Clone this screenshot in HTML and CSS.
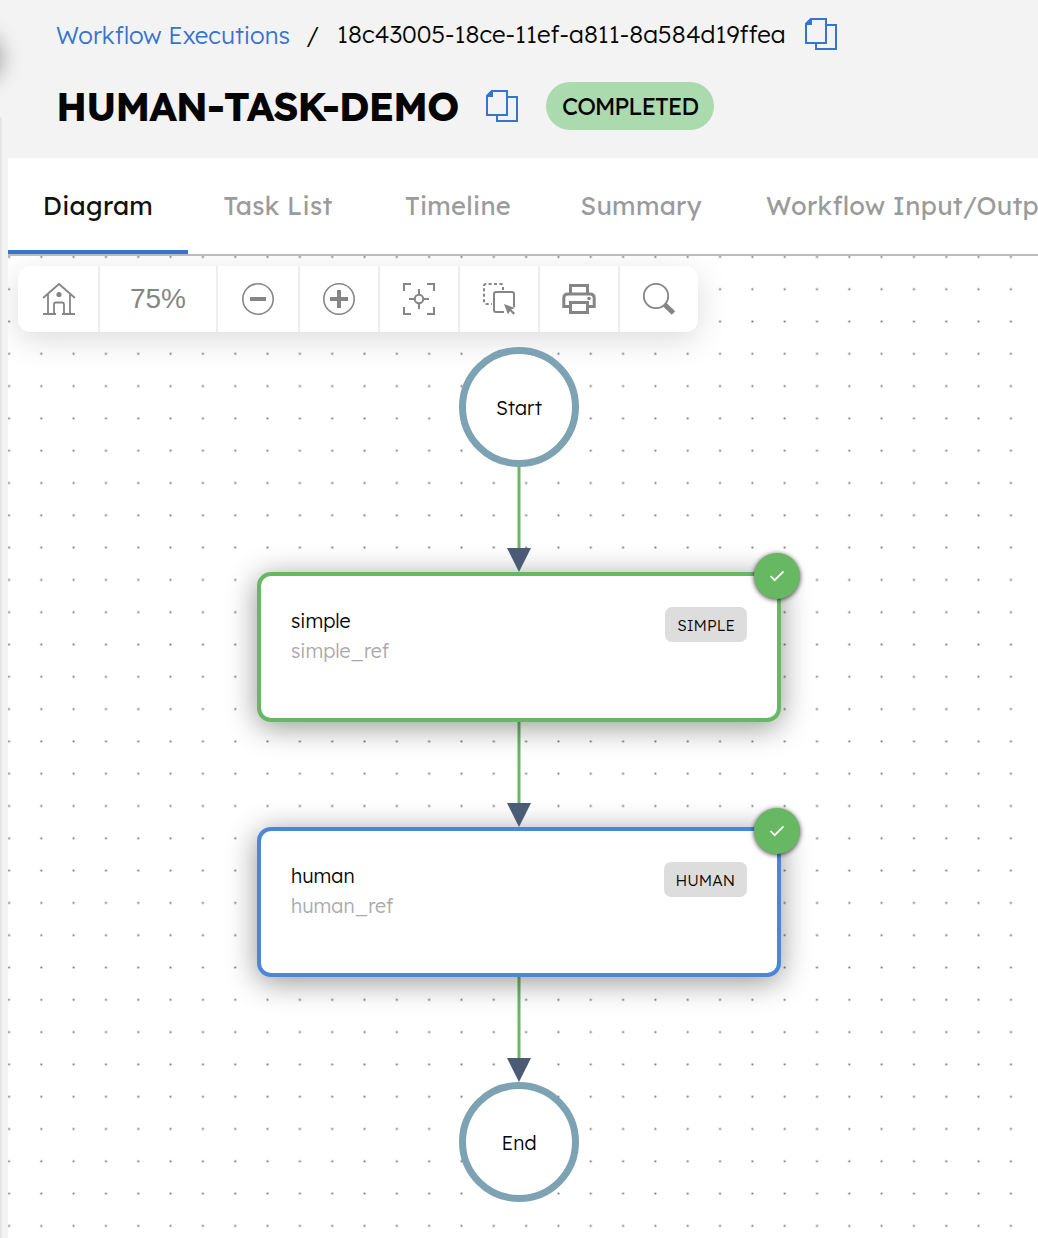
FILE: index.html
```html
<!DOCTYPE html>
<html lang="en">
<head>
<meta charset="utf-8">
<title>HUMAN-TASK-DEMO</title>
<link rel="stylesheet" href="styles.css">
</head>
<body>
<svg width="0" height="0" class="defs">
  <symbol id="copy" viewBox="0 0 32 32"><path d="M6 1H21V25H1V6ZM21 7H31V31H11V25" fill="none" stroke="currentColor" stroke-width="2"/><path d="M6 1V6H1Z" fill="currentColor" stroke="currentColor" stroke-width="2"/></symbol>
</svg>
<div class="app">
  <div class="rail"><div class="knob"></div><div class="rail-line"></div></div>
  <header class="header">
    <nav class="crumbs">
      <a class="crumb-link">Workflow Executions</a>
      <span class="slash">/</span>
      <span class="crumb-id">18c43005-18ce-11ef-a811-8a584d19ffea</span>
      <svg class="copy"><use href="#copy"/></svg>
    </nav>
    <div class="title-row">
      <h1 class="title">HUMAN-TASK-DEMO</h1>
      <svg class="copy"><use href="#copy"/></svg>
      <span class="status">COMPLETED</span>
    </div>
  </header>
  <main class="main">
    <div class="tabs">
      <div class="tab tab-active">Diagram</div>
      <div class="tab">Task List</div>
      <div class="tab">Timeline</div>
      <div class="tab tab-summary">Summary</div>
      <div class="tab tab-last">Workflow Input/Output</div>
    </div>
    <div class="canvas">
      <svg class="grid" width="1030" height="982">
        <defs><pattern id="dots" x="-15.15" y="-15.25" width="32.32" height="32.3" patternUnits="userSpaceOnUse"><rect x="15.25" y="15.25" width="1.8" height="1.8" fill="#6c6c6c"/></pattern></defs>
        <rect width="1030" height="982" fill="url(#dots)"/>
      </svg>
      <div class="toolbar">
        <div class="tool tool-home"><svg width="34" height="34" viewBox="0 0 34 34" fill="none" stroke="currentColor" stroke-width="1.8"><path d="M1 16 17 2 33 16M6 12V32M28 12V32M1 32H14M20 32H33M12 32V22.500Q12 20.500 14 20.500H20Q22 20.500 22 22.500V32"/><circle cx="17" cy="12.5" r="2.6" fill="currentColor" stroke="none"/></svg></div>
        <div class="tool tool-zoom">75%</div>
        <div class="tool tool-minus"><svg width="34" height="34" viewBox="0 0 34 34" fill="none" stroke="currentColor"><circle cx="17" cy="17" r="15.2" stroke-width="1.6"/><path d="M9 17H25" stroke-width="4"/></svg></div>
        <div class="tool"><svg width="34" height="34" viewBox="0 0 34 34" fill="none" stroke="currentColor"><circle cx="17" cy="17" r="15.2" stroke-width="1.6"/><path d="M8 17H26M17 8V26" stroke-width="4"/></svg></div>
        <div class="tool"><svg width="34" height="34" viewBox="0 0 34 34" fill="none" stroke="currentColor" stroke-width="2"><path d="M2 9V2H9M25 2H32V9M32 25V32H25M9 32H2V25"/><circle cx="17" cy="17" r="4.2"/><path d="M7 17H13M21 17H27M17 7V13M17 21V27"/></svg></div>
        <div class="tool"><svg width="34" height="34" viewBox="0 0 34 34" fill="none" stroke="currentColor" stroke-width="2"><path d="M21 8V4Q21 2 19 2H4Q2 2 2 4V20Q2 22 4 22H10" stroke-dasharray="3 2.4"/><path d="M22 30H14Q12 30 12 28V12Q12 10 14 10H30Q32 10 32 12V25"/><path d="M22 22 33 26 29.3 27.5 33 31 31.5 32.7 28 29 26 32.5Z" fill="currentColor" stroke="none"/></svg></div>
        <div class="tool"><svg width="36" height="34" viewBox="0 0 36 34" fill="none" stroke="currentColor" stroke-width="3"><path d="M9.5 11V3.5H26.500V11M9 24.500H2.800V16Q2.800 12 7 12H29Q33.200 12 33.200 16V24.500H27M9.500 20.500H26.500V30.500H9.500Z"/><circle cx="28" cy="16.500" r="1.800" fill="currentColor" stroke="none"/></svg></div>
        <div class="tool tool-search"><svg width="34" height="34" viewBox="0 0 34 34" fill="none" stroke="currentColor"><circle cx="14" cy="14" r="12.200" stroke-width="1.800"/><path d="M22.500 22.500 31.500 31" stroke-width="5"/></svg></div>
      </div>
      <svg class="edges" width="1030" height="982" fill="none">
        <path d="M511 210V294M511 466V549M511 721V804" stroke="#67b862" stroke-width="3"/>
      </svg>
      <div class="terminal start">Start</div>
      <div class="node node-simple">
        <div class="names"><span>simple</span><span class="ref">simple_ref</span></div>
        <span class="kind kind-simple">SIMPLE</span>
        <span class="badge"><svg width="16" height="12" viewBox="0 0 16 12"><path d="M1.500 6 5.700 10.200 14.500 1.300" fill="none" stroke="#fff" stroke-width="1.700"/></svg></span>
      </div>
      <div class="node node-human">
        <div class="names"><span>human</span><span class="ref">human_ref</span></div>
        <span class="kind kind-human">HUMAN</span>
        <span class="badge"><svg width="16" height="12" viewBox="0 0 16 12"><path d="M1.500 6 5.700 10.200 14.500 1.300" fill="none" stroke="#fff" stroke-width="1.700"/></svg></span>
      </div>
      <div class="terminal end">End</div>
      <svg class="edges" width="1030" height="982" fill="#4b5a75"><path d="M499 292H523L511 316ZM499 547H523L511 571ZM499 802H523L511 826Z"/></svg>
    </div>
  </main>
</div>
</body>
</html>
```
FILE: styles.css
```css
* { box-sizing: border-box; }
body { margin: 0; font-family: Lexend, Inter, sans-serif; color: #050505; }
.defs { position: absolute; }
.app { position: relative; width: 1038px; height: 1238px; overflow: hidden; background: #f3f3f3; display: flex; flex-direction: column; }
svg { display: block; flex: none; }
.rail { position: absolute; left: 0; top: 0; width: 8px; height: 100%; }
.knob { position: absolute; left: -47px; top: 35px; width: 46px; height: 46px; border-radius: 50%; box-shadow: 0 0 20px 4px rgba(0,0,0,.3); }
.rail-line { position: absolute; left: 0; top: 117px; width: 2px; bottom: 0; background: #e6e6e6; border-radius: 0 2px 0 0; }
.header { height: 158px; padding: 18px 0 0 56px; white-space: nowrap; }
.crumbs { display: flex; height: 32px; align-items: center; font-size: 24px; font-weight: 300; line-height: 32px; }
.crumb-link { width: 250px; color: #3674d0; padding-top: 2px; }
.slash { width: 31px; padding-top: 2px; }
.crumb-id { width: 468px; }
.copy { width: 32px; height: 32px; color: #3674d0; }
.title-row { display: flex; height: 48px; align-items: center; margin-top: 32px; }
.title { width: 430px; margin: 0; font-size: 40px; line-height: 48px; font-weight: 700; letter-spacing: -1.2px; }
.status { width: 168px; height: 48px; margin-left: 28px; border-radius: 24px; background: #acdaaf; display: flex; align-items: center; justify-content: center; font-size: 24px; font-weight: 400; letter-spacing: -1.2px; }
.main { margin-left: 8px; background: #fff; height: 1080px; }
.tabs { display: flex; height: 98px; border-bottom: 2px solid #bbb; white-space: nowrap; overflow: hidden; }
.tab { flex: none; height: 96px; width: 180px; display: flex; align-items: center; justify-content: center; font-size: 25.500px; color: #9b9b9b; letter-spacing: .3px; padding-bottom: 2px; }
.tab-active { color: #111; border-bottom: 4px solid #3674cf; padding: 2px 0 0; }
.tab-summary { width: 186px; }
.tab-last { justify-content: flex-start; width: 340px; padding-left: 32px; }
.canvas { position: relative; height: 982px; overflow: hidden; }
.grid, .edges { position: absolute; left: 0; top: 0; }
.toolbar { position: absolute; left: 10px; top: 10px; display: flex; width: 680px; height: 66px; border-radius: 12px; background: #fff; color: #858585; box-shadow: 0 8px 32px rgba(0,0,0,.14); }
.tool { width: 80px; display: flex; align-items: center; justify-content: center; border-right: 2px solid #ededed; }
.tool-home { width: 82px; padding-left: 1px; }
.tool-zoom { width: 118px; font: 28px "Liberation Sans", sans-serif; }
.tool-minus { width: 82px; }
.tool-search { width: 78px; border-right: 0; }
.terminal { position: absolute; left: 451px; width: 120px; height: 120px; border: 7.500px solid #7da2b3; border-radius: 50%; background: #fff; display: flex; align-items: center; justify-content: center; font-size: 19.500px; font-weight: 300; }
.start { top: 91px; }
.end { top: 826px; }
.node { position: absolute; left: 249px; width: 524px; height: 149.500px; border: 4.500px solid #67b862; border-radius: 14px; background: #fff; display: flex; justify-content: space-between; align-items: flex-start; padding: 30px; box-shadow: 0 5px 30px rgba(0,0,0,.42); }
.node-simple { top: 316px; }
.node-human { top: 571px; border-color: #4b87d9; }
.names { display: flex; flex-direction: column; font-size: 19.500px; font-weight: 300; line-height: 30px; }
.ref { color: #aaa; }
.kind { height: 35px; margin-top: .5px; border-radius: 7px; background: #ddd; display: flex; align-items: center; justify-content: center; font-size: 15.600px; font-weight: 300; padding-top: 1px; }
.kind-simple { width: 82px; }
.kind-human { width: 83.500px; }
.badge { position: absolute; right: -23px; top: -23.500px; width: 46px; height: 46px; border-radius: 50%; background: #67b862; box-shadow: 0 1px 5px rgba(0,0,0,.75); display: flex; align-items: center; justify-content: center; }
```
